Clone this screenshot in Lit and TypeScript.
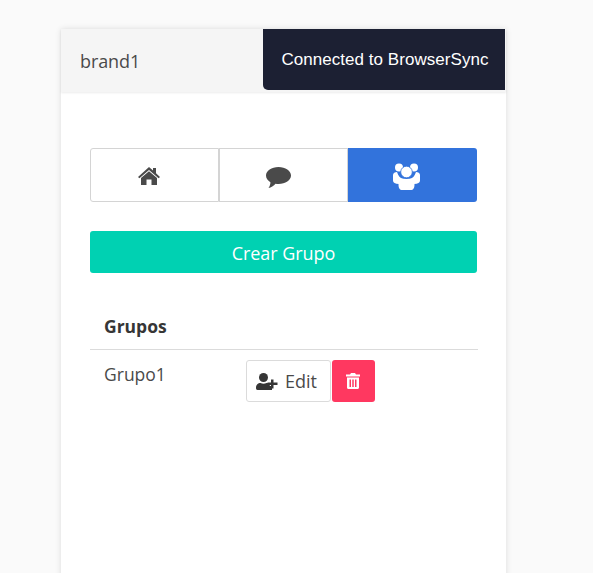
import { LitElement, html, css } from "lit";
import { customElement } from "lit/decorators.js";

@customElement("app-root")
export class AppRoot extends LitElement {
  static styles = css`
    :host { display: block; height: 573px; background: #fafafa; overflow: hidden; font-family: "Open Sans", "Noto Sans", sans-serif; color: #363636; }
    .page { padding: 29px 87px 0 61px; }
    .card { position: relative; width: 445px; height: 560px; background: #fff; box-shadow: 0 0 6px rgba(0,0,0,.12); }
    .head { height: 63px; box-sizing: border-box; padding: 20px 0 0 19px; background: #f5f5f5; box-shadow: 0 1px 2px rgba(0,0,0,.08); font-size: 18px; letter-spacing: -.1px; line-height: 24px; color: #4a4a4a; }
    .toast { position: absolute; top: 0; right: 1px; width: 242px; height: 61px; box-sizing: border-box; padding: 20px 0 0 18.5px; background: #1c2033; color: #fff; border-bottom-left-radius: 5px; font: 17px/21px "Liberation Sans", Arial, sans-serif; letter-spacing: .04px; white-space: nowrap; }
    .body { padding: 56px 29px 0 29px; }
    .tabs { display: grid; grid-template-columns: 129px 129px 129px; height: 54px; }
    .tab { display: flex; align-items: center; justify-content: center; box-sizing: border-box; padding-right: 11px; border: 1px solid #d4d4d4; color: #4a4a4a; background: #fff; }
    .tab:first-child { border-radius: 3px 0 0 3px; }
    .tab.on { background: #3273dc; border: 0; border-radius: 0 3px 3px 0; color: #fff; }
    .home { margin: 2px 1px 0 0; }
    .chat { margin-top: 5px; }
    .people { margin: 2px 2px 0 0; }
    .cta { display: flex; align-items: center; justify-content: center; margin-top: 29px; padding-top: 1px; box-sizing: border-box; height: 42px; border-radius: 3px; background: #00d1b2; color: #fff; font-size: 18px; letter-spacing: -.05px; }
    .table { margin-top: 31px; width: 388px; }
    .th { height: 46px; box-sizing: border-box; padding: 10px 14px 0; border-bottom: 1px solid #dbdbdb; font-weight: 700; font-size: 17.5px; line-height: 24px; color: #363636; }
    .row { display: grid; grid-template-columns: 156px 1fr; padding-top: 10px; }
    .name { padding: 2px 0 0 14px; font-size: 17.5px; line-height: 24px; color: #4a4a4a; }
    .actions { display: flex; gap: 1px; }
    .edit { display: flex; align-items: center; gap: 7px; box-sizing: border-box; width: 85px; height: 42px; padding-left: 9px; border: 1px solid #dbdbdb; border-radius: 3px; font-size: 18px; color: #4a4a4a; background: #fff; }
    .edit svg { color: #363636; }
    .del { display: flex; align-items: center; justify-content: center; width: 43px; height: 42px; padding-right: 1px; box-sizing: border-box; border-radius: 3px; background: #ff3860; color: #fff; }
    svg { display: block; fill: currentColor; }
  `;

  render() {
    return html`
      <div class="page">
        <div class="card">
          <div class="head">brand1</div>
          <div class="toast">Connected to BrowserSync</div>
          <div class="body">
            <div class="tabs">
              <div class="tab">
                <svg class="home" width="22" height="18" viewBox="0 0 22 18"><path d="M11 0 L15 3.500 V1 H18 V6.200 L22 10 L20.600 11.300 L11 3 L1.400 11.300 L0 10 Z M11 4.200 L19 11 V18 H13.500 V12.500 H8.500 V18 H3 V11 Z"/></svg>
              </div>
              <div class="tab">
                <svg class="chat" width="25" height="21" viewBox="0 0 25 21"><path d="M12.500 0C19.400 0 25 3.800 25 8.500S19.400 17 12.500 17C11.500 17 10.500 16.900 9.500 16.700 7.800 18.600 5 20.400 2.500 21 3.700 19.400 4.500 17.200 4.400 15.200 1.700 13.600 0 11.200 0 8.500 0 3.800 5.600 0 12.500 0Z"/></svg>
              </div>
              <div class="tab on">
                <svg class="people" width="27" height="27" viewBox="0 0 27 27"><circle cx="6" cy="4.500" r="4"/><circle cx="21" cy="4.500" r="4"/><path d="M0 12C0 10 2 9 4 9 5.500 13 7 15 10 16 7 17 6 18.500 6 21 2 21 0 19.500 0 17.500Z M27 12C27 10 25 9 23 9 21.500 13 20 15 17 16 20 17 21 18.500 21 21 25 21 27 19.500 27 17.500Z"/><circle cx="13.500" cy="9" r="5.800" stroke="#3273dc" stroke-width=".8"/><path d="M8.500 15.600C10 15.900 11.500 16 13.500 16 15.500 16 17 15.900 18.500 15.600 21 16.400 21.500 18.500 21.500 21.500 21.500 25 20.500 27 17.500 27H9.500C6.500 27 5.500 25 5.500 21.500 5.500 18.500 6 16.400 8.500 15.600Z"/></svg>
              </div>
            </div>
            <div class="cta">Crear Grupo</div>
            <div class="table">
              <div class="th">Grupos</div>
              <div class="row">
                <div class="name">Grupo1</div>
                <div class="actions">
                  <div class="edit">
                    <svg width="22" height="17" viewBox="0 0 22 17"><circle cx="7.500" cy="4.500" r="4.500"/><path d="M0 15C0 11.500 2 10 4.500 10 6.500 11 8.500 11 10.500 10 12 10 13 10.600 13.800 11.500V13H16V17H1.500C.5 17 0 16.300 0 15Z"/><path d="M15 6.500h2.500V9.500H21.500V12H17.500V15.500H15V12H11.500V9.500H15Z"/></svg>
                    <span>Edit</span>
                  </div>
                  <div class="del">
                    <svg width="14" height="16" viewBox="0 0 14 16"><path fill-rule="evenodd" d="M5 0H9L10 1.500H14V3.500H0V1.500H4ZM1 4.500H13V14.500C13 15.400 12.400 16 11.500 16H2.500C1.600 16 1 15.400 1 14.500ZM3.500 6.500V14H5V6.500ZM6.250 6.500V14H7.750V6.500ZM9 6.500V14H10.500V6.500Z"/></svg>
                  </div>
                </div>
              </div>
            </div>
          </div>
        </div>
      </div>
    `;
  }
}
